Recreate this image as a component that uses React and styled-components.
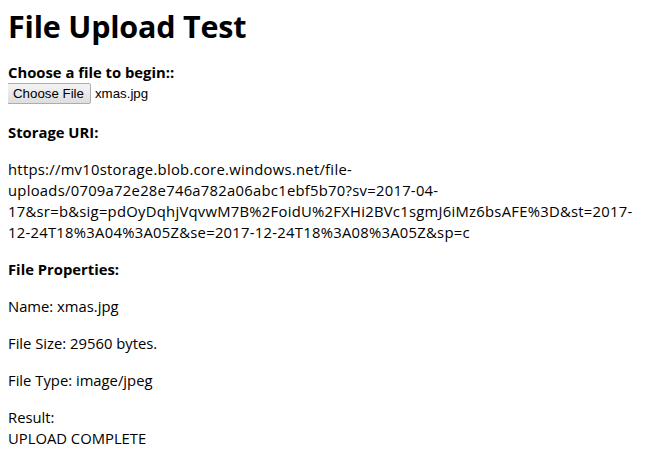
import React from 'react';
import styled, { createGlobalStyle } from 'styled-components';

const GlobalStyle = createGlobalStyle`
  body {
    margin: 8px;
    background: #fff;
    color: #000;
    font-family: "Open Sans", "Noto Sans", sans-serif;
    font-size: 14.8px;
    line-height: 21px;
  }
`;

const Page = styled.div`
  display: block;
`;

const Title = styled.h1`
  font-size: 30.5px;
  line-height: 36px;
  font-weight: 700;
  margin: 0 0 18px 0;
  letter-spacing: -0.2px;
`;

const Label = styled.div`
  font-weight: 700;
`;

const PickerRow = styled.div`
  display: flex;
  align-items: center;
  gap: 4px;
  height: 21px;
  font-family: "Liberation Sans", Arial, sans-serif;
  font-size: 13.3px;
`;

const PickButton = styled.button`
  font-family: "Liberation Sans", Arial, sans-serif;
  font-size: 13.3px;
  height: 21px;
  padding: 0 6px;
  margin: 0 0 0 -2px;
  border: 1px solid #adadad;
  border-radius: 2px;
  background: linear-gradient(#f4f4f4, #dedede);
  color: #000;
`;

const Para = styled.p`
  margin: ${(p) => p.$top || 16}px 0 16px 0;
  font-weight: ${(p) => (p.$bold ? 700 : 400)};
`;

const Line = styled.span`
  display: block;
  white-space: nowrap;
  letter-spacing: 0.27px;
`;

const uriLines = [
  'https://mv10storage.blob.core.windows.net/file-',
  'uploads/0709a72e28e746a782a06abc1ebf5b70?sv=2017-04-',
  '17&sr=b&sig=pdOyDqhjVqvwM7B%2FoidU%2FXHi2BVc1sgmJ6iMz6bsAFE%3D&st=2017-',
  '12-24T18%3A04%3A05Z&se=2017-12-24T18%3A08%3A05Z&sp=c',
];

const App = () => {
  return (
    <Page>
      <GlobalStyle />
      <Title>File Upload Test</Title>
      <Label>Choose a file to begin::</Label>
      <PickerRow>
        <PickButton>Choose File</PickButton>
        <span>xmas.jpg</span>
      </PickerRow>
      <Para $bold $top={18}>Storage URI:</Para>
      <Para>
        {uriLines.map((l) => (
          <Line key={l}>{l}</Line>
        ))}
      </Para>
      <Para $bold>File Properties:</Para>
      <Para>Name: xmas.jpg</Para>
      <Para>File Size: 29560 bytes.</Para>
      <Para>File Type: image/jpeg</Para>
      <Para>
        Result:
        <br />
        UPLOAD COMPLETE
      </Para>
    </Page>
  );
};

export default App;
